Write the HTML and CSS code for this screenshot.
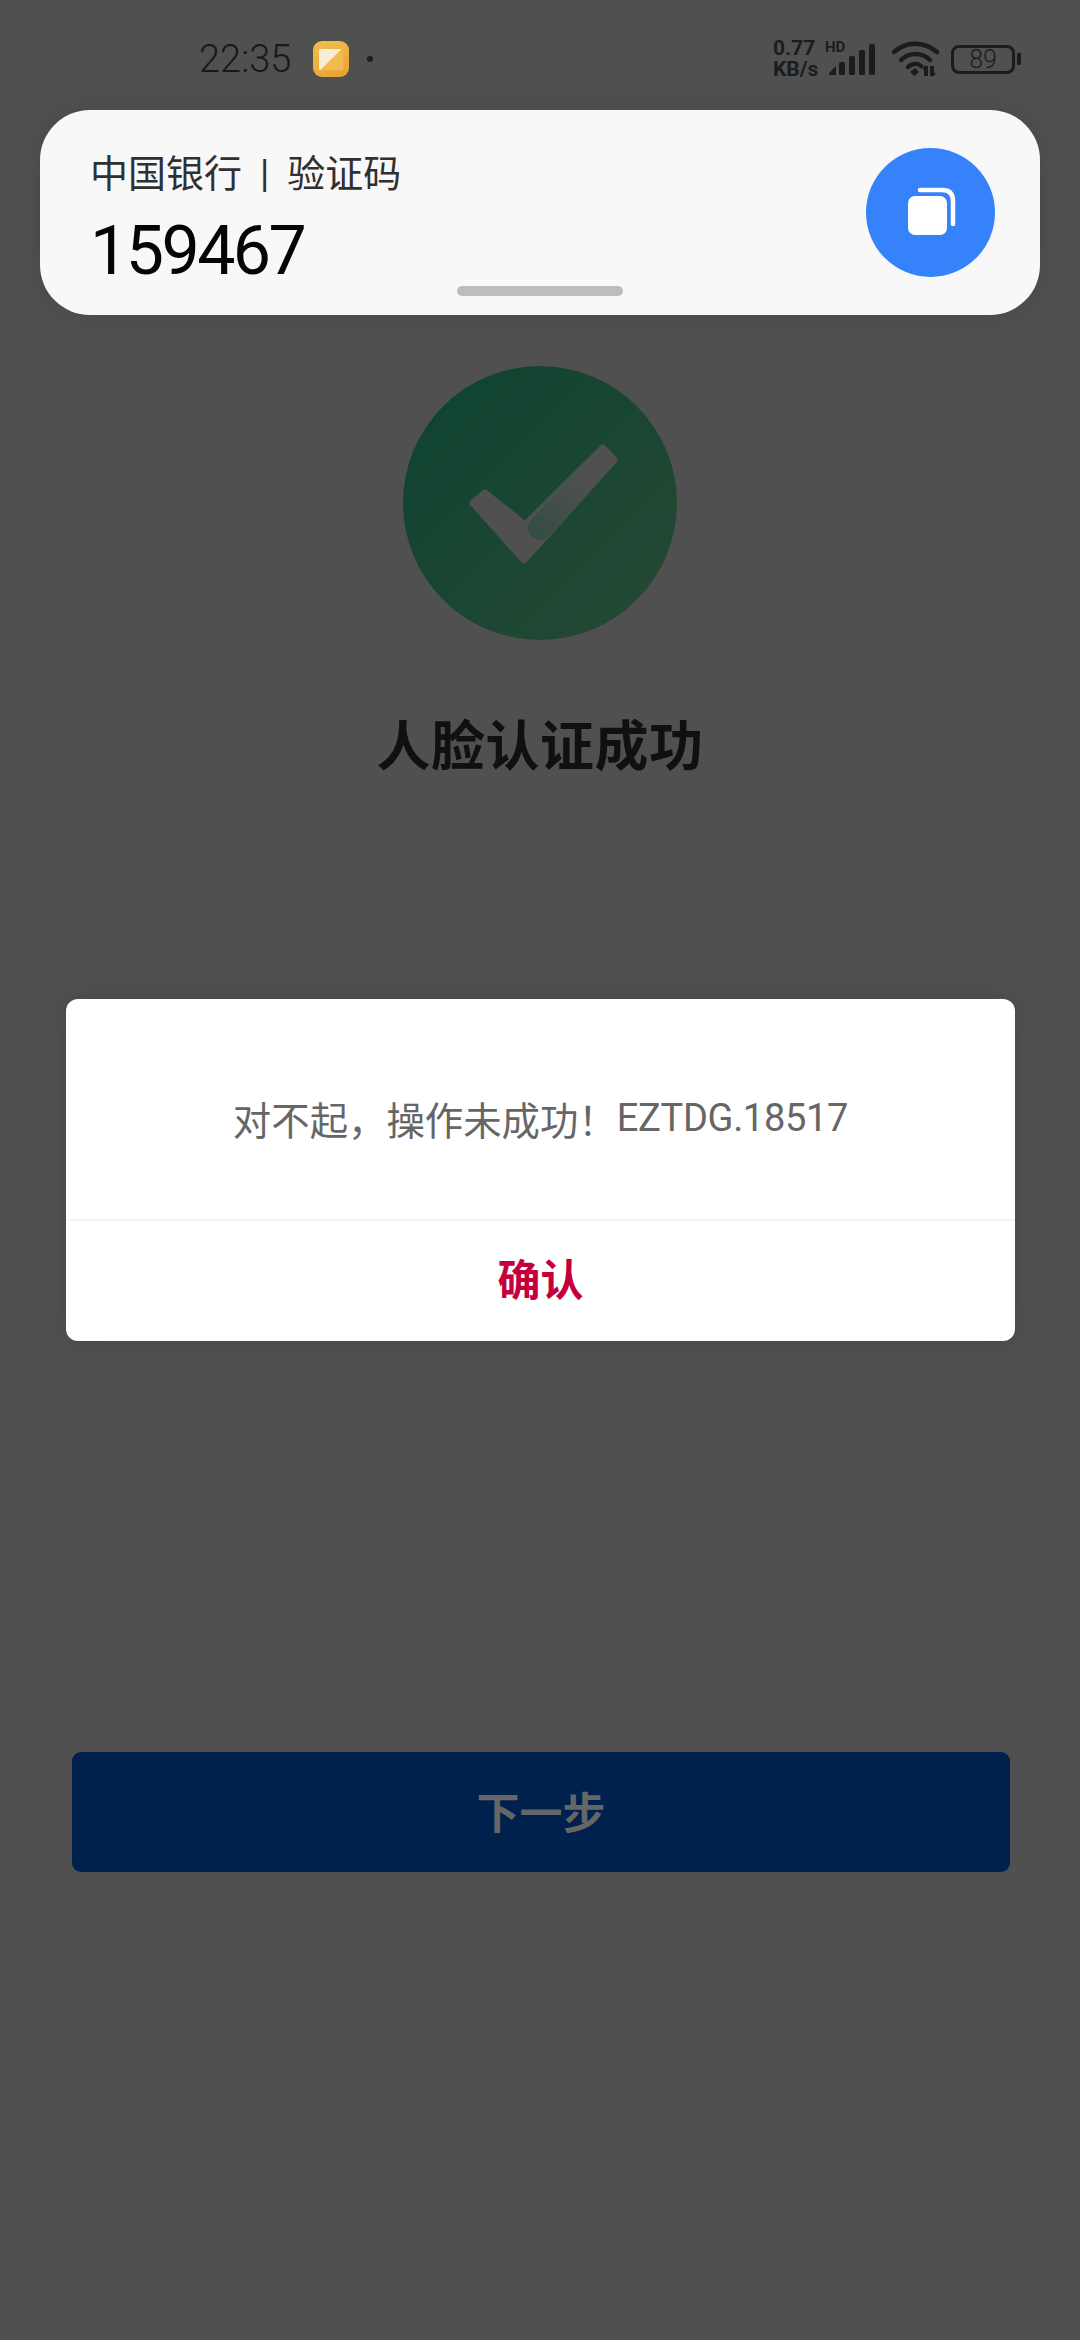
FILE: index.html
```html
<!DOCTYPE html>
<html lang="zh-CN">
<head>
  <meta charset="UTF-8" />
  <meta name="viewport" content="width=device-width, initial-scale=1.0"/>
  <title>人脸认证</title>
  <link rel="stylesheet" href="styles.css">
</head>
<body>
  <div class="screen">
    <div class="statusbar">
      <div class="status-left">
        <span class="clock">22:35</span>
        <span class="app-icon"><span class="app-icon-inner"></span></span>
        <span class="status-dot"></span>
      </div>
      <div class="status-right">
        <div class="speed"><span>0.77</span><span>KB/s</span></div>
        <div class="signal">
          <span class="hd">HD</span>
          <svg width="48" height="32" viewBox="0 0 48 32">
            <path d="M1 29 L8 22 V31 H2 Q1 31 1 29 Z" fill="#1c1c1c"/>
            <rect x="11" y="18" width="6" height="13" rx="1.5" fill="#1c1c1c"/>
            <rect x="21" y="12" width="6" height="19" rx="1.5" fill="#1c1c1c"/>
            <rect x="31" y="6" width="6" height="25" rx="1.5" fill="#1c1c1c"/>
            <rect x="41" y="0" width="6" height="31" rx="1.5" fill="#1c1c1c"/>
          </svg>
        </div>
        <svg class="wifi" width="48" height="36" viewBox="0 0 48 36">
          <path d="M2 11 C14 0 32 0 45 11" fill="none" stroke="#1c1c1c" stroke-width="4.5" stroke-linecap="round"/>
          <path d="M9 19 C17 11 30 11 38 19" fill="none" stroke="#1c1c1c" stroke-width="4.5" stroke-linecap="round"/>
          <path d="M16 26 C20 22 26 22 29 25" fill="none" stroke="#1c1c1c" stroke-width="4.5" stroke-linecap="round"/>
          <path d="M18 31 L23 27 L27 31 L22.500 35 Z" fill="#1c1c1c"/>
          <path d="M34 25 V35 M40 25 V35" stroke="#1c1c1c" stroke-width="4"/>
          <path d="M31 28 L34 25 M43 32 L40 35" stroke="#1c1c1c" stroke-width="2"/>
        </svg>
        <div class="battery"><span class="battery-level">89</span></div>
        <span class="battery-nub"></span>
      </div>
    </div>

    <div class="result">
      <svg class="result-icon" width="274" height="274" viewBox="0 0 274 274">
        <defs>
          <linearGradient id="disc" x1="0" y1="0" x2="1" y2="1">
            <stop offset="0" stop-color="#0c4330"/>
            <stop offset="1" stop-color="#274934"/>
          </linearGradient>
          <linearGradient id="fade" gradientUnits="userSpaceOnUse" x1="130" y1="170" x2="182" y2="114">
            <stop offset="0" stop-color="#1c4a36" stop-opacity="0.55"/>
            <stop offset="1" stop-color="#1c4a36" stop-opacity="0"/>
          </linearGradient>
        </defs>
        <circle cx="137" cy="137" r="137" fill="url(#disc)"/>
        <path d="M70 137 L82 127 L122 159 L200 82 L211 94 L121 194 Z" fill="#505050" stroke="#505050" stroke-width="7" stroke-linejoin="round"/>
        <path d="M137 162 L190 105" fill="none" stroke="url(#fade)" stroke-width="24" stroke-linecap="round"/>
      </svg>
      <h1 class="result-title">人脸认证成功</h1>
    </div>

    <button class="next-btn">下一步</button>

    <!-- sms code popup -->
    <div class="sms-card">
      <div class="sms-text">
        <div class="sms-from">中国银行<span class="sms-sep">|</span>验证码</div>
        <div class="sms-code">159467</div>
      </div>
      <div class="copy-btn">
        <svg width="56" height="56" viewBox="0 0 56 56">
          <rect x="5" y="11" width="39" height="39" rx="7" fill="#fff"/>
          <path d="M17 5 H39 Q50 5 50 16 V39" fill="none" stroke="#fff" stroke-width="4.500" stroke-linecap="round"/>
        </svg>
      </div>
      <span class="sms-handle"></span>
    </div>

    <!-- error dialog -->
    <div class="dialog">
      <div class="dialog-msg">对不起，操作未成功！<span class="dialog-code">EZTDG.18517</span></div>
      <div class="dialog-btn">确认</div>
    </div>
  </div>
</body>
</html>
```

FILE: styles.css
```css
* {
  box-sizing: border-box;
  margin: 0;
  padding: 0;
}

body {
  background: #505050;
  font-family: 'Roboto', 'Noto Sans CJK SC', sans-serif;
}

.screen {
  position: relative;
  width: 1080px;
  height: 2340px;
  overflow: hidden;
  background: #505050;
}

.statusbar {
  display: flex;
  justify-content: space-between;
  align-items: center;
  height: 110px;
  padding: 8px 59px 0 199px;
}

.status-left {
  display: flex;
  align-items: center;
}

.clock {
  font-size: 38px;
  font-weight: 300;
  color: #181818;
}

.app-icon {
  display: flex;
  align-items: center;
  justify-content: center;
  width: 36px;
  height: 36px;
  margin-left: 22px;
  border-radius: 9px;
  background: linear-gradient(160deg, #f0c04c, #e9a032);
}

.app-icon-inner {
  width: 24px;
  height: 21px;
  border-radius: 1px;
  background: linear-gradient(135deg, #f8edd5 50%, #f2bb52 50%);
}

.status-dot {
  width: 6px;
  height: 6px;
  margin-left: 18px;
  border-radius: 50%;
  background: #1c1c1c;
}

.status-right {
  display: flex;
  align-items: center;
  color: #1c1c1c;
}

.speed {
  display: flex;
  flex-direction: column;
  width: 55px;
  font-size: 21px;
  font-weight: 700;
  line-height: 21px;
}

.signal {
  position: relative;
  width: 50px;
  height: 32px;
  margin-top: 2px;
}

.signal svg {
  display: block;
}

.hd {
  position: absolute;
  left: -3px;
  top: -5px;
  font-size: 15px;
  font-weight: 700;
  line-height: 16px;
}

.wifi {
  margin-left: 14px;
}

.battery {
  display: flex;
  align-items: center;
  justify-content: center;
  width: 64px;
  height: 29px;
  margin-left: 11px;
  border: 3px solid #1c1c1c;
  border-radius: 8px;
}

.battery-level {
  font-size: 25px;
  font-weight: 300;
  line-height: 1;
}

.battery-nub {
  width: 4px;
  height: 12px;
  margin-left: 2px;
  border-radius: 1px;
  background: #1c1c1c;
}

.result {
  display: flex;
  flex-direction: column;
  align-items: center;
  padding-top: 256px;
}

.result-icon {
  display: block;
}

.result-title {
  margin-top: 69px;
  font-size: 54px;
  font-weight: 700;
  line-height: 78px;
  letter-spacing: 0.5px;
  color: #101010;
}

.next-btn {
  display: block;
  width: 938px;
  height: 120px;
  margin: 965px 0 0 72px;
  padding-bottom: 5px;
  border: none;
  border-radius: 9px;
  background: #00204d;
  color: #666;
  font-family: inherit;
  font-size: 43px;
  font-weight: 700;
}

.sms-card {
  position: absolute;
  left: 40px;
  top: 110px;
  display: flex;
  justify-content: space-between;
  align-items: center;
  width: 1000px;
  height: 205px;
  padding: 0 45px 0 50px;
  border-radius: 50px;
  background: #f8f8f8;
  box-shadow: 0 0 24px rgba(0, 0, 0, 0.12);
}

.sms-text {
  padding-top: 17px;
}

.sms-from {
  margin-top: -2px;
  font-size: 38px;
  line-height: 50px;
  color: #303030;
}

.sms-sep {
  margin: 0 18px;
}

.sms-code {
  margin-top: 12px;
  font-size: 68px;
  line-height: 80px;
  letter-spacing: -2.5px;
  color: #050505;
}

.copy-btn {
  display: flex;
  align-items: center;
  justify-content: center;
  width: 129px;
  height: 129px;
  border-radius: 50%;
  background: #3582fb;
}

.sms-handle {
  position: absolute;
  left: 417px;
  bottom: 19px;
  width: 166px;
  height: 10px;
  border-radius: 5px;
  background: #bdbdbd;
}

.dialog {
  position: absolute;
  left: 66px;
  top: 999px;
  width: 949px;
  height: 342px;
  border-radius: 12px;
  background: #fff;
  box-shadow: 0 0 24px rgba(0, 0, 0, 0.12);
}

.dialog-msg {
  display: flex;
  align-items: center;
  justify-content: center;
  height: 222px;
  padding-top: 18px;
  border-bottom: 2px solid #f4f4f4;
  font-size: 38.4px;
  color: #666;
}

.dialog-code {
  font-size: 38px;
  letter-spacing: -0.3px;
}

.dialog-btn {
  display: flex;
  align-items: center;
  justify-content: center;
  height: 112px;
  font-size: 43px;
  font-weight: 700;
  color: #c4003c;
}
```
